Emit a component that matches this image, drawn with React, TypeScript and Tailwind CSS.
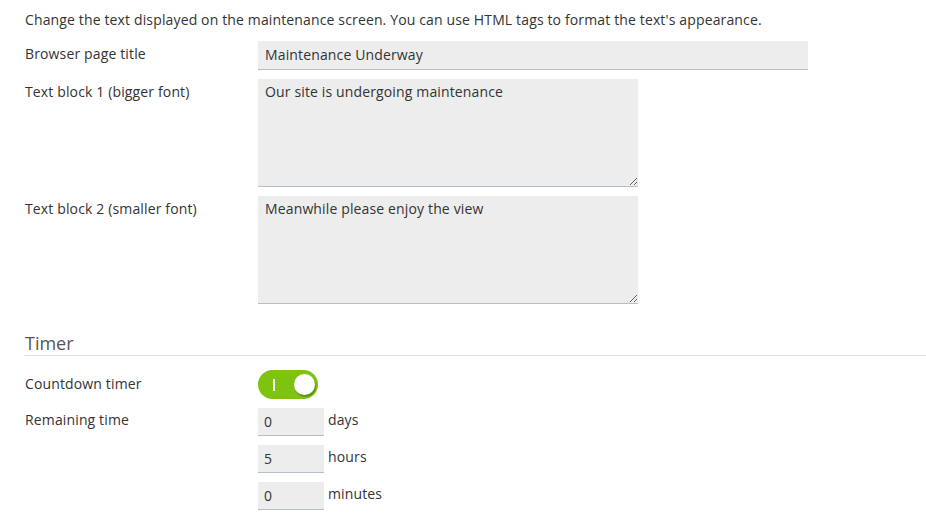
import React from "react";

const font = { fontFamily: '"Open Sans", "Noto Sans", sans-serif' };

function Label({ children, pt = "pt-[3px]" }: { children: React.ReactNode; pt?: string }) {
  return (
    <div className={`w-[233px] shrink-0 ${pt} text-[14px] leading-[20px] tracking-[0.14px] text-[#333]`}>
      {children}
    </div>
  );
}

function NumberField({ value, unit }: { value: string; unit: string }) {
  return (
    <div className="flex items-start">
      <input
        readOnly
        value={value}
        className="h-[28px] w-[66px] bg-[#ededed] border-b border-[#b3c0c9] px-[6px] text-[14px] leading-[20px] text-[#333] outline-none"
        style={font}
      />
      <span className="pl-[4px] pt-[2px] text-[14px] leading-[20px] tracking-[0.14px] text-[#333]">{unit}</span>
    </div>
  );
}

export default function App() {
  return (
    <div className="min-h-[523px] w-[926px] bg-white pl-[25px] pt-[10px]" style={font}>
      <p className="text-[14px] leading-[20px] tracking-[0.14px] text-[#333]">
        Change the text displayed on the maintenance screen. You can use HTML tags to format the text's appearance.
      </p>
      <div className="mt-[11px] flex flex-col gap-[9px]">
        <div className="flex">
          <Label>Browser page title</Label>
          <input
            readOnly
            value="Maintenance Underway"
            className="h-[29px] w-[550px] bg-[#ededed] border-b border-[#b3c0c9] px-[7px] pb-[2px] text-[14px] leading-[20px] tracking-[0.14px] text-[#333] outline-none"
            style={font}
          />
        </div>
        <div className="flex">
          <Label>Text block 1 (bigger font)</Label>
          <textarea
            readOnly
            value="Our site is undergoing maintenance"
            className="block h-[108px] w-[380px] bg-[#ededed] border-b border-[#b3c0c9] px-[7px] pt-[3px] pb-[4px] text-[14px] leading-[20px] tracking-[0.14px] text-[#333] outline-none"
            style={font}
          />
        </div>
        <div className="flex">
          <Label>Text block 2 (smaller font)</Label>
          <textarea
            readOnly
            value="Meanwhile please enjoy the view"
            className="block h-[108px] w-[380px] bg-[#ededed] border-b border-[#b3c0c9] px-[7px] pt-[3px] pb-[4px] text-[14px] leading-[20px] tracking-[0.14px] text-[#333] outline-none"
            style={font}
          />
        </div>
      </div>

      <h2 className="mt-[27px] h-[25px] border-b border-[#dedede] text-[18px] leading-[24px] text-[#555]">
        Timer
      </h2>

      <div className="mt-[14px] flex flex-col gap-[9px]">
        <div className="flex">
          <Label pt="pt-[4px]">Countdown timer</Label>
          <div className="relative h-[29px] w-[60px] rounded-full bg-[#7dc30f]">
            <span className="absolute left-[15px] top-[9px] h-[12px] w-[2px] bg-white" />
            <span className="absolute right-[3px] top-[4px] h-[21px] w-[21px] rounded-full bg-white shadow-[1px_2px_1px_rgba(60,110,0,0.55)]" />
          </div>
        </div>
        <div className="flex">
          <Label pt="pt-[2px]">Remaining time</Label>
          <div className="flex flex-col gap-[9px]">
            <NumberField value="0" unit="days" />
            <NumberField value="5" unit="hours" />
            <NumberField value="0" unit="minutes" />
          </div>
        </div>
      </div>
    </div>
  );
}
